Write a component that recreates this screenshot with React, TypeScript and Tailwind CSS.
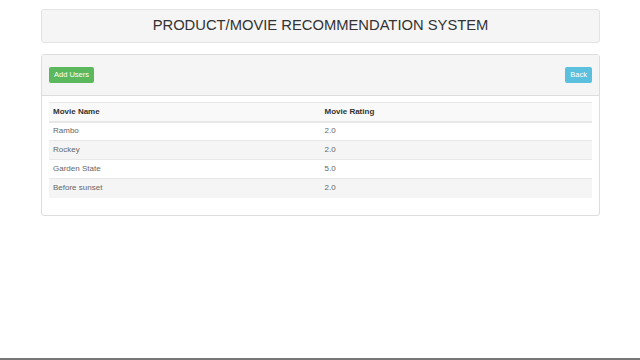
const movies = [
  { name: "Rambo", rating: "2.0" },
  { name: "Rockey", rating: "2.0" },
  { name: "Garden State", rating: "5.0" },
  { name: "Before sunset", rating: "2.0" },
];

export default function App() {
  return (
    <div className="flex h-screen flex-col bg-white font-['Liberation_Sans',Arial,sans-serif] text-[#333]">
      <div className="flex-1 pl-[41px] pr-[40px] pt-[9px]">
        <div className="flex h-[34px] items-center justify-center rounded-[3px] border border-[#e3e3e3] bg-[#f5f5f5] pb-[1px]">
          <h2 className="text-[14.75px] leading-none">PRODUCT/MOVIE RECOMMENDATION SYSTEM</h2>
        </div>

        <div className="mt-[11px] rounded-[3px] border border-[#ddd] bg-white">
          <div className="flex h-[41px] items-center justify-between border-b border-[#ddd] bg-[#f5f5f5] px-[7px]">
            <button type="button" className="h-[16px] rounded-[2px] bg-[#5cb85c] px-[5px] text-[7.5px] leading-none text-white">
              Add Users
            </button>
            <button type="button" className="h-[16px] rounded-[2px] bg-[#5bc0de] px-[5px] text-[7.5px] leading-none text-white">
              Back
            </button>
          </div>
          <div className="px-[7px] pb-[17px] pt-[6px]">
            <table className="w-full border-collapse text-[8px]">
              <thead>
                <tr className="h-[19px] border-t border-b-2 border-[#e8e8e8] bg-[#f9f9f9]">
                  <th className="w-1/2 px-[4px] text-left font-bold">Movie Name</th>
                  <th className="px-[4px] text-left font-bold">Movie Rating</th>
                </tr>
              </thead>
              <tbody>
                {movies.map((movie, i) => (
                  <tr key={movie.name} className={`h-[19px] border-t border-[#e8e8e8] ${i % 2 === 1 ? "bg-[#f5f5f5]" : "bg-white"}`}>
                    <td className="px-[4px] text-[#666]">{movie.name}</td>
                    <td className="px-[4px] text-[#666]">{movie.rating}</td>
                  </tr>
                ))}
              </tbody>
            </table>
          </div>
        </div>
      </div>
      <div className="h-[2px] bg-[#777]" />
    </div>
  );
}
